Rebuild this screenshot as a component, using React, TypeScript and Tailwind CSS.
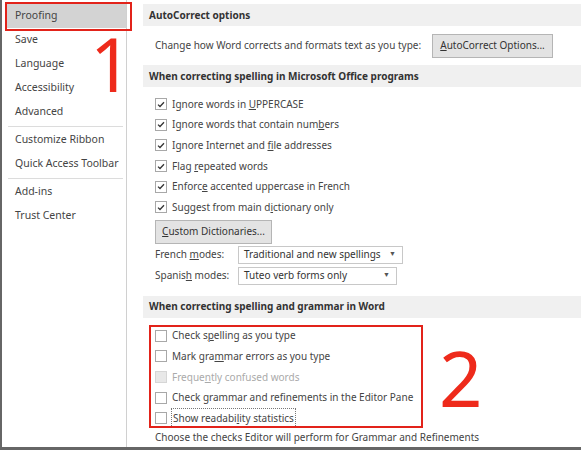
import React from "react";

const font = { fontFamily: '"Noto Sans", "Open Sans", sans-serif' };

function Check({ checked, disabled }: { checked?: boolean; disabled?: boolean }) {
  return (
    <span
      className={
        "flex h-[12px] w-[12px] shrink-0 items-center justify-center border " +
        (disabled ? "border-[#d6d6d6] bg-[#e8e8e8]" : "border-[#a8a8a8] bg-white")
      }
    >
      {checked && (
        <svg width="8" height="7" viewBox="0 0 8 7">
          <path d="M1 3.6 L3 5.5 L7 1.2" fill="none" stroke="#333" strokeWidth="1.3" />
        </svg>
      )}
    </span>
  );
}

function Row({
  children,
  checked,
  disabled,
  boxed,
}: {
  children: React.ReactNode;
  checked?: boolean;
  disabled?: boolean;
  boxed?: boolean;
}) {
  return (
    <div className="flex h-[20.6px] items-center gap-[5px] whitespace-nowrap pl-[12px]">
      <Check checked={checked} disabled={disabled} />
      <span
        className={
          (disabled ? "text-[#aaa] " : "text-[#444] ") +
          (boxed ? "-ml-[1px] border border-dotted border-[#777] px-[1px] leading-[18px]" : "")
        }
      >
        {children}
      </span>
    </div>
  );
}

function Heading({ children }: { children: React.ReactNode }) {
  return (
    <div className="flex h-[22px] items-center whitespace-nowrap bg-[#f0f0f0] pl-[6px] font-bold text-[#333]">
      {children}
    </div>
  );
}

function Select({ label, width }: { label: string; width: string }) {
  return (
    <div
      className={
        "flex h-[18px] items-center justify-between whitespace-nowrap border border-[#c8c8c8] bg-white pl-[5px] pr-[6px] text-[#333] " +
        width
      }
    >
      <span>{label}</span>
      <span className="text-[7px] text-[#555]">▼</span>
    </div>
  );
}

const sideItems = [
  ["Proofing", "Save", "Language", "Accessibility", "Advanced"],
  ["Customize Ribbon", "Quick Access Toolbar"],
  ["Add-ins", "Trust Center"],
];

export default function App() {
  return (
    <div
      style={font}
      className="relative flex h-[450px] w-[581px] overflow-hidden border-b-[3px] border-l-2 border-[#666] bg-white text-[10px]"
    >
      {/* Sidebar */}
      <div className="w-[125px] shrink-0 border-r border-[#d0d0d0] pt-[4px]">
        {sideItems.map((group, gi) => (
          <div key={gi}>
            {gi > 0 && <div className="mb-[1px] ml-[6px] mr-[3px] mt-[2px] h-px bg-[#dcdcdc]" />}
            {group.map((item) => (
              <div
                key={item}
                className={
                  "ml-[5px] flex h-[24px] items-center whitespace-nowrap pl-[8px] text-[10.5px] text-[#444] " +
                  (item === "Proofing" ? "bg-[#d3d3d3] text-[#222]" : "")
                }
              >
                {item}
              </div>
            ))}
          </div>
        ))}
      </div>

      {/* Content */}
      <div className="flex-1 pl-[16px] pt-[4px]">
        <Heading>AutoCorrect options</Heading>
        <div className="flex h-[39px] items-center whitespace-nowrap pl-[12px] text-[#444]">
          <span className="w-[265px]">Change how Word corrects and formats text as you type:</span>
          <button className="ml-[12px] h-[24px] w-[121px] border border-[#b5b5b5] bg-[#e3e3e3] text-[#333]">
            <u>A</u>utoCorrect Options...
          </button>
        </div>
        <Heading>When correcting spelling in Microsoft Office programs</Heading>
        <div className="pt-[7px]">
          <Row checked>
            Ignore words in <u>U</u>PPERCASE
          </Row>
          <Row checked>
            Ignore words that contain num<u>b</u>ers
          </Row>
          <Row checked>
            Ignore Internet and <u>f</u>ile addresses
          </Row>
          <Row checked>
            Flag <u>r</u>epeated words
          </Row>
          <Row checked>
            Enforc<u>e</u> accented uppercase in French
          </Row>
          <Row checked>
            Suggest from main d<u>i</u>ctionary only
          </Row>
        </div>
        <div className="pl-[12px] pt-[2px]">
          <button className="h-[24px] w-[117px] whitespace-nowrap border border-[#b5b5b5] bg-[#e3e3e3] text-[#333]">
            <u>C</u>ustom Dictionaries...
          </button>
          <div className="mt-[1px] flex h-[20px] items-center whitespace-nowrap text-[#444]">
            <span className="w-[83px]">
              French <u>m</u>odes:
            </span>
            <Select label="Traditional and new spellings" width="w-[165px]" />
          </div>
          <div className="mt-[1px] flex h-[20px] items-center whitespace-nowrap text-[#444]">
            <span className="w-[83px]">
              Spanis<u>h</u> modes:
            </span>
            <Select label="Tuteo verb forms only" width="w-[159px]" />
          </div>
        </div>
        <div className="mt-[10px]">
          <Heading>When correcting spelling and grammar in Word</Heading>
        </div>
        <div className="pt-[8px]">
          <Row>
            Check s<u>p</u>elling as you type
          </Row>
          <Row>
            Mark gra<u>m</u>mar errors as you type
          </Row>
          <Row disabled>
            Freque<u>n</u>tly confused words
          </Row>
          <Row>Check grammar and refinements in the Editor Pane</Row>
          <Row boxed>
            Show readabi<u>l</u>ity statistics
          </Row>
        </div>
        <div className="whitespace-nowrap pl-[12px] pt-[1px] text-[#444]">
          Choose the checks Editor will perform for Grammar and Refinements
        </div>
      </div>

      {/* Annotations */}
      <div className="absolute left-[3px] top-[2px] h-[29px] w-[127px] border-2 border-[#e2231a]" />
      <div
        className="absolute left-[88px] top-[27px] text-[74px] leading-none text-[#ee2a1b]"
        style={{ fontFamily: '"Noto Sans", sans-serif' }}
      >
        1
      </div>
      <div className="absolute left-[147px] top-[325px] h-[103px] w-[274px] border-2 border-[#e2231a]" />
      <div
        className="absolute left-[437px] top-[340px] text-[76px] leading-none text-[#ee2a1b]"
        style={{ fontFamily: '"Noto Sans", sans-serif' }}
      >
        2
      </div>
    </div>
  );
}
